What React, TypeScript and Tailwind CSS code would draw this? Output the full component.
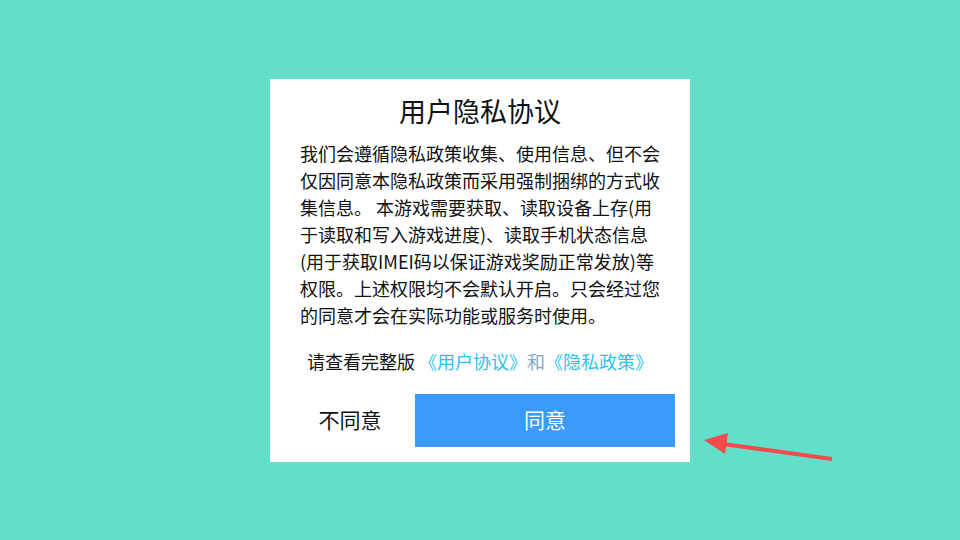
export default function App() {
  return (
    <div className="relative flex h-[540px] w-[960px] items-center justify-center overflow-hidden bg-[#62dfca] font-['Noto_Sans_CJK_SC',sans-serif]">
      <div className="flex w-[420px] flex-col bg-white px-[30px] pb-[15px] pt-[16px] text-[#111]">
        <h1 className="text-center text-[27px] leading-[32px]">用户隐私协议</h1>
        <p className="mt-[13px] text-[18px] leading-[27px]">
          我们会遵循隐私政策收集、使用信息、但不会仅因同意本隐私政策而采用强制捆绑的方式收集信息。 本游戏需要获取、读取设备上存(用于读取和写入游戏进度)、读取手机状态信息(用于获取IMEI码以保证游戏奖励正常发放)等权限。上述权限均不会默认开启。只会经过您的同意才会在实际功能或服务时使用。
        </p>
        <div className="mt-[16px] text-center text-[18px] leading-[32px]">
          请查看完整版 <span className="text-[#2ac3ef]">《用户协议》</span>
          <span className="text-[#7fa9c9]">和</span>
          <span className="text-[#2ac3ef]">《隐私政策》</span>
        </div>
        <div className="-mx-[15px] mt-[17px] flex h-[53px]">
          <button className="w-[130px] text-[21px]">不同意</button>
          <button className="flex-1 bg-[#3a9bfc] text-[21px] text-white">同意</button>
        </div>
      </div>
      <svg className="absolute left-0 top-0" width="960" height="540">
        <line x1="832" y1="459" x2="716" y2="443" stroke="#f44a4c" strokeWidth="4" />
        <polygon points="704,440 728,433 725,454" fill="#f44a4c" />
      </svg>
    </div>
  );
}
